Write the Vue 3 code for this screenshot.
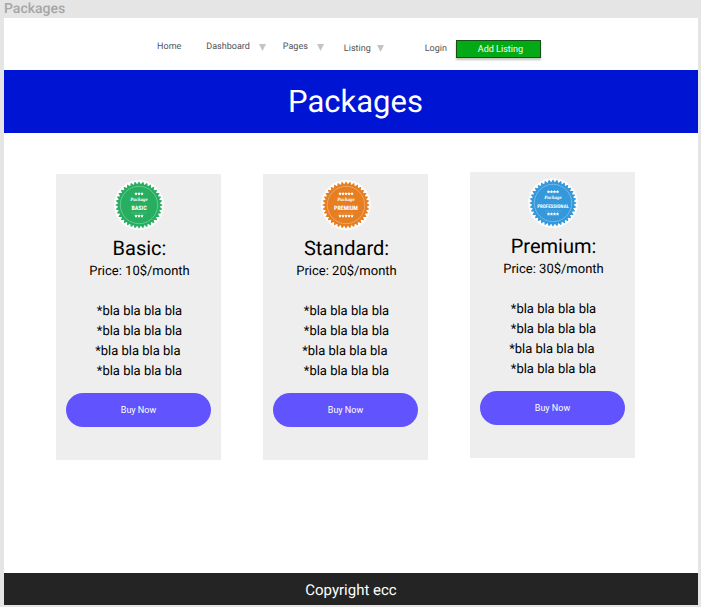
<script setup>
const menus = [
  { label: 'Home', drop: false },
  { label: 'Dashboard', drop: true },
  { label: 'Pages', drop: true }
]

// The trailing blank on the third feature is part of its copy.
const features = ['*bla bla bla bla', '*bla bla bla bla', '*bla bla bla bla ', '*bla bla bla bla']

const plans = [
  { name: 'Basic', price: 10, tier: 'BASIC', kind: 'basic', stars: 3 },
  { name: 'Standard', price: 20, tier: 'PREMIUM', kind: 'premium', stars: 5 },
  { name: 'Premium', price: 30, tier: 'PROFESSIONAL', kind: 'professional', stars: 4 }
]

const ring = (cx, cy, outer, inner, count) =>
  Array.from({ length: count * 2 }, (_, i) => {
    const r = i % 2 ? inner : outer
    const a = (Math.PI * i) / count - Math.PI / 2
    return `${(cx + r * Math.cos(a)).toFixed(2)},${(cy + r * Math.sin(a)).toFixed(2)}`
  }).join(' ')

const seal = ring(25, 25, 23.8, 20.8, 36)
const starRow = (count, y) =>
  Array.from({ length: count }, (_, i) => ring(25 + (i - (count - 1) / 2) * 3, y, 1.8, 0.9, 5))
</script>

<template>
  <div class="canvas">
    <div class="frame-name">Packages</div>
    <div class="page">
      <nav class="nav">
        <div class="group">
          <a v-for="m in menus" :key="m.label" href="#" class="link">
            {{ m.label }}
            <svg v-if="m.drop" class="caret" viewBox="0 0 7 7" aria-hidden="true"><path d="M0 0H7L3.5 7Z" /></svg>
          </a>
        </div>
        <div class="group account">
          <a href="#" class="link listing">
            Listing
            <svg class="caret" viewBox="0 0 7 7" aria-hidden="true"><path d="M0 0H7L3.5 7Z" /></svg>
          </a>
          <a href="#" class="link">Login</a>
          <button type="button" class="add">Add Listing</button>
        </div>
      </nav>

      <header class="banner"><h1>Packages</h1></header>

      <main class="plans">
        <section v-for="p in plans" :key="p.name" class="card" :class="p.kind">
          <svg class="badge" viewBox="0 0 50 50" aria-hidden="true">
            <circle cx="25" cy="25" r="24.8" fill="#fff" />
            <polygon class="seal" :points="seal" />
            <circle class="rim" cx="25" cy="25" r="18.7" />
            <polygon v-for="s in starRow(p.stars, 13.8)" :key="s" class="star" :points="s" />
            <text class="script" x="25" y="20.5">Package</text>
            <text class="tier" x="25" y="29.5">{{ p.tier }}</text>
            <path class="rule" d="M17 33H33" />
            <polygon v-for="s in starRow(p.stars, 36)" :key="s" class="star" :points="s" />
          </svg>
          <h2>{{ p.name }}:</h2>
          <p class="price">Price: {{ p.price }}$/month</p>
          <ul>
            <li v-for="(f, i) in features" :key="i">{{ f }}</li>
          </ul>
          <button type="button" class="buy">Buy Now</button>
        </section>
      </main>

      <footer class="footer">Copyright ecc</footer>
    </div>
  </div>
</template>

<style>
body {
  margin: 0;
  background: #e5e5e5;
}
</style>

<style scoped>
.canvas {
  box-sizing: border-box;
  min-height: 100vh;
  display: flex;
  flex-direction: column;
  padding: 0 3px 2px 4px;
  font-family: Roboto, "Liberation Sans", sans-serif;
  text-rendering: geometricPrecision;
  color: #000;
}
.frame-name {
  height: 18px;
  line-height: 18px;
  font-size: 14px;
  font-weight: 500;
  color: #a6a6a6;
}
.page {
  flex: 1;
  display: flex;
  flex-direction: column;
  background: #fff;
}
.nav {
  height: 52px;
  display: flex;
  justify-content: center;
  padding-right: 4px;
}
.group {
  display: flex;
  align-items: center;
  gap: 25px;
  height: 57px;
}
.account {
  height: 61px;
  margin-left: 20px;
  gap: 9px;
}
.link {
  display: flex;
  align-items: center;
  gap: 9px;
  font-size: 9px;
  line-height: 12px;
  color: #555;
  text-decoration: none;
}
.link + .link + .link {
  margin-left: -8px;
}
.listing {
  gap: 6px;
  margin-right: 32px;
}
.caret {
  width: 7px;
  height: 7px;
  padding-top: 2px;
  fill: #c4c4c4;
}
.listing .caret {
  padding-top: 0;
}
.add {
  box-sizing: border-box;
  width: 85px;
  height: 18px;
  padding: 0 0 0 4px;
  border: 1px solid #174d1b;
  background: #04aa16;
  box-shadow: 0 2px 2px rgba(0, 0, 0, 0.25);
  color: #fff;
  font-family: inherit;
  font-size: 9px;
  line-height: 14px;
}
.banner {
  background: #0014d4;
  text-align: center;
  padding: 13px 0 12px 9px;
}
h1 {
  margin: 0;
  font-size: 31px;
  line-height: 38px;
  font-weight: 400;
  color: #fff;
}
.plans {
  flex: 1;
  display: grid;
  grid-template-columns: repeat(3, 1fr);
  gap: 42px;
  align-items: start;
  padding: 41px 63px 32px 52px;
}
.card {
  display: flex;
  flex-direction: column;
  align-items: center;
  padding: 6px 10px 33px;
  background: #eee;
}
.professional {
  margin-top: -2px;
}
.badge {
  width: 50px;
  height: 50px;
}
.seal {
  fill: #27ae60;
}
.premium .seal {
  fill: #e67e22;
}
.professional .seal {
  fill: #3498db;
}
.rim {
  fill: none;
  stroke: #fff;
  stroke-opacity: 0.5;
  stroke-width: 0.6;
}
.star {
  fill: #fff;
}
.rule {
  stroke: #fff;
  stroke-opacity: 0.25;
  stroke-width: 0.5;
}
.script {
  fill: #fff;
  font-family: "Liberation Serif", serif;
  font-size: 5px;
  font-style: italic;
  font-weight: 700;
  text-anchor: middle;
}
.tier {
  fill: #fff;
  font-family: "Liberation Sans Narrow", "Roboto Condensed", Roboto, sans-serif;
  font-size: 6px;
  font-weight: 700;
  text-anchor: middle;
}
.professional .tier {
  font-size: 5px;
}
h2 {
  margin: 6px 0 0;
  font-size: 20px;
  line-height: 24px;
  font-weight: 400;
}
.price,
li {
  font-size: 13px;
  line-height: 20px;
}
.price {
  margin: 2px 0 0;
}
h2,
.price,
ul {
  padding-left: 2px;
}
ul {
  list-style: none;
  margin: 20px 0 11px;
  text-align: center;
}
li {
  white-space: pre;
}
.buy {
  width: 100%;
  height: 34px;
  padding: 0;
  border: 0;
  border-radius: 17px;
  background: #6154ff;
  color: #fff;
  font-family: inherit;
  font-size: 9px;
}
.footer {
  background: #242424;
  color: #fff;
  text-align: center;
  font-size: 15px;
  line-height: 29px;
  padding-top: 3px;
}
</style>
